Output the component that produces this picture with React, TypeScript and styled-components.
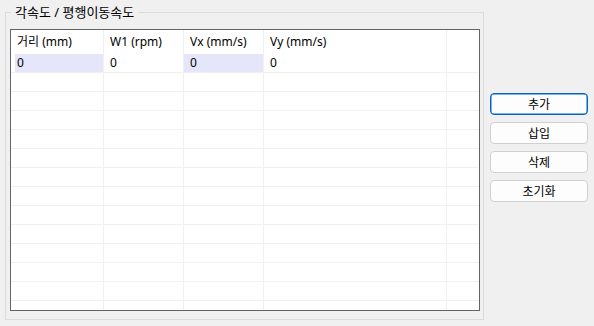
import styled, { createGlobalStyle } from 'styled-components';

const GlobalStyle = createGlobalStyle`
    html, body {
        margin: 0;
        padding: 0;
        background: #f0f0f0;
    }
    body {
        width: 594px;
        height: 326px;
        overflow: hidden;
        font-family: "Noto Sans", "Noto Sans CJK KR", sans-serif;
        font-size: 12px;
        color: #000;
    }
`;

const Page = styled.div`
    display: flex;
    align-items: flex-start;
    width: 594px;
    height: 326px;
`;

const GroupBox = styled.fieldset`
    box-sizing: border-box;
    margin: 4px 0 0 5px;
    padding: 0 3px 0 4px;
    width: 479px;
    height: 316px;
    border: 1px solid #dcdcdc;
    border-radius: 0;
`;

const GroupTitle = styled.legend`
    margin-left: 1px;
    padding: 0 4px;
    height: 16px;
    line-height: 16px;
    font-size: 13px;
    color: #000;
`;

const Grid = styled.div`
    box-sizing: border-box;
    margin-top: 9px;
    height: 282px;
    border: 1px solid #646464;
    background: #fff;
    overflow: hidden;
`;

const COLS = '93px 80px 80px 183px 1fr';

const HeaderRow = styled.div`
    display: grid;
    grid-template-columns: ${COLS};
    height: 24px;
`;

const HeaderCell = styled.div<{ $last?: boolean }>`
    padding-left: 6px;
    line-height: 24px;
    border-right: ${(p) => (p.$last ? 'none' : '1px solid #f0f0f0')};
    white-space: nowrap;
`;

const Row = styled.div`
    display: grid;
    grid-template-columns: ${COLS};
    height: 19px;
    border-bottom: 1px solid #f0f0f0;
    box-sizing: border-box;
`;

const Cell = styled.div<{ $selected?: boolean; $first?: boolean; $last?: boolean }>`
    padding-left: 6px;
    line-height: 18px;
    border-right: ${(p) => (p.$last ? 'none' : '1px solid #f0f0f0')};
    background: ${(p) =>
        p.$selected
            ? p.$first
                ? 'linear-gradient(to right, transparent 4px, #e6e6fa 4px)'
                : '#e6e6fa'
            : 'transparent'};
`;

const ButtonColumn = styled.div`
    display: flex;
    flex-direction: column;
    gap: 7px;
    margin: 93px 0 0 6px;
`;

const Button = styled.button<{ $focused?: boolean }>`
    width: 98px;
    height: 22px;
    padding: 0;
    font-family: inherit;
    font-size: 12px;
    color: #000;
    background: #fdfdfd;
    border: 1px solid ${(p) => (p.$focused ? '#0067c0' : '#d0d0d0')};
    border-radius: 4px;
    box-shadow: ${(p) => (p.$focused ? 'inset 0 0 0 0.5px #0067c0' : 'none')};
`;

const headers = ['거리 (mm)', 'W1 (rpm)', 'Vx (mm/s)', 'Vy (mm/s)', ''];
const emptyRows = Array.from({ length: 13 });

const App = () => {
    return (
        <Page>
            <GlobalStyle />
            <GroupBox>
                <GroupTitle>각속도 / 평행이동속도</GroupTitle>
                <Grid>
                    <HeaderRow>
                        {headers.map((h, i) => (
                            <HeaderCell key={i} $last={i === headers.length - 1}>
                                {h}
                            </HeaderCell>
                        ))}
                    </HeaderRow>
                    <Row>
                        <Cell $selected $first>0</Cell>
                        <Cell>0</Cell>
                        <Cell $selected>0</Cell>
                        <Cell>0</Cell>
                        <Cell $last />
                    </Row>
                    {emptyRows.map((_, r) => (
                        <Row key={r}>
                            <Cell />
                            <Cell />
                            <Cell />
                            <Cell />
                            <Cell $last />
                        </Row>
                    ))}
                </Grid>
            </GroupBox>
            <ButtonColumn>
                <Button $focused>추가</Button>
                <Button>삽입</Button>
                <Button>삭제</Button>
                <Button>초기화</Button>
            </ButtonColumn>
        </Page>
    );
};
export default App;
